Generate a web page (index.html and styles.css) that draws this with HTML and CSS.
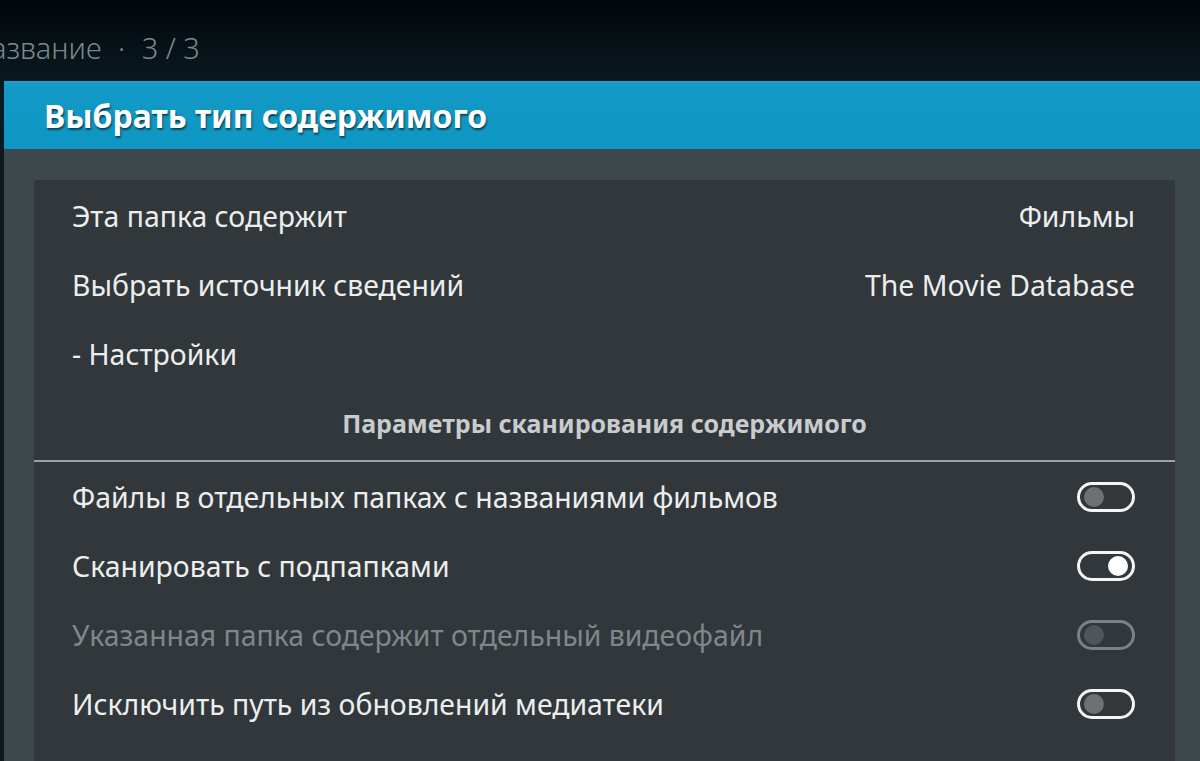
FILE: index.html
```html
<!DOCTYPE html>
<html lang="ru">
<head>
<meta charset="utf-8">
<link rel="stylesheet" href="styles.css">
</head>
<body>
<div class="screen">
  <div class="crumb">Название <span class="dot">·</span> 3 / 3</div>
  <div class="dialog">
    <div class="dialog-head">Выбрать тип содержимого</div>
    <div class="dialog-body">
      <div class="panel">
        <div class="row"><span class="label">Эта папка содержит</span><span class="value">Фильмы</span></div>
        <div class="row"><span class="label">Выбрать источник сведений</span><span class="value">The Movie Database</span></div>
        <div class="row"><span class="label">- Настройки</span></div>
        <div class="section">Параметры сканирования содержимого</div>
        <div class="row"><span class="label">Файлы в отдельных папках с названиями фильмов</span><span class="toggle"><span class="knob"></span></span></div>
        <div class="row"><span class="label">Сканировать с подпапками</span><span class="toggle on"><span class="knob"></span></span></div>
        <div class="row disabled"><span class="label">Указанная папка содержит отдельный видеофайл</span><span class="toggle"><span class="knob"></span></span></div>
        <div class="row"><span class="label">Исключить путь из обновлений медиатеки</span><span class="toggle"><span class="knob"></span></span></div>
      </div>
    </div>
  </div>
</div>
</body>
</html>
```
FILE: styles.css
```css
html, body {
  margin: 0;
  padding: 0;
  width: 1200px;
  height: 761px;
  overflow: hidden;
}
body {
  font-family: "Noto Sans", "Open Sans", sans-serif;
  background: linear-gradient(180deg, #01060a 0px, #061218 50px, #0c1b21 90px, #0c1b21 100%);
}
.screen {
  width: 1200px;
  height: 761px;
  display: flex;
  flex-direction: column;
}
.crumb {
  height: 81px;
  box-sizing: border-box;
  padding-top: 29px;
  margin-left: -30px;
  font-size: 29px;
  line-height: 38px;
  font-weight: 300;
  color: #7c878c;
  white-space: nowrap;
}
.crumb .dot {
  padding: 0 9px;
}
.dialog {
  margin-left: 4px;
  flex: 1;
  display: flex;
  flex-direction: column;
}
.dialog-head {
  height: 68px;
  box-sizing: border-box;
  background: linear-gradient(180deg, #1aa0cc 0px, #1299c6 6px, #0f97c4 100%);
  color: #ffffff;
  font-weight: 700;
  font-size: 32px;
  line-height: 70px;
  padding-left: 40px;
  text-shadow: 1px 2px 2px rgba(0, 0, 0, 0.55);
  white-space: nowrap;
}
.dialog-body {
  flex: 1;
  background: #3d484d;
  padding: 31px 25px 0 30px;
}
.panel {
  background: #31373b;
  border-radius: 3px 3px 0 0;
  height: 100%;
  padding-top: 1px;
  box-sizing: border-box;
}
.row {
  height: 69px;
  display: flex;
  align-items: center;
  justify-content: space-between;
  padding: 0 40px 0 38px;
  font-size: 28.4px;
  color: #eceeee;
}
.row .label {
  white-space: nowrap;
}
.row .value {
  color: #eceeee;
  white-space: nowrap;
}
.row.disabled {
  color: #7f878b;
}
.section {
  height: 74px;
  box-sizing: border-box;
  border-bottom: 2px solid #9ba1a4;
  text-align: center;
  font-size: 25px;
  font-weight: 700;
  color: #c9cccd;
  line-height: 70px;
  white-space: nowrap;
}
.toggle {
  width: 58px;
  height: 30px;
  box-sizing: border-box;
  border: 3px solid #f4f5f5;
  border-radius: 15px;
  display: flex;
  align-items: center;
  padding: 0 4px;
  flex: none;
}
.toggle .knob {
  width: 20px;
  height: 20px;
  border-radius: 50%;
  background: #6c7176;
}
.toggle.on {
  justify-content: flex-end;
}
.toggle.on .knob {
  background: #ffffff;
}
.row.disabled .toggle {
  border-color: #7b8185;
}
.row.disabled .toggle .knob {
  background: #4f555a;
}
```
